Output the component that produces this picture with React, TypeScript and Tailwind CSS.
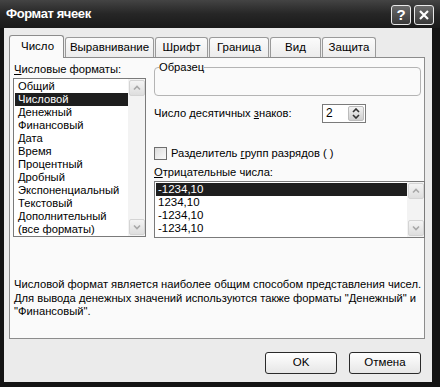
import React from 'react';

const formats = [
  'Общий',
  'Числовой',
  'Денежный',
  'Финансовый',
  'Дата',
  'Время',
  'Процентный',
  'Дробный',
  'Экспоненциальный',
  'Текстовый',
  'Дополнительный',
  '(все форматы)',
];

const negatives = ['-1234,10', '1234,10', '-1234,10', '-1234,10'];

const tabs = ['Выравнивание', 'Шрифт', 'Граница', 'Вид', 'Защита'];
const tabWidths = ['w-[89px]', 'w-[53px]', 'w-[60px]', 'w-[51px]', 'w-[54px]'];

function ScrollArrow({ down }: { down?: boolean }) {
  return (
    <div className="w-[16px] h-[16px] rounded-[2px] border border-[#d4d4d4] bg-gradient-to-b from-[#f4f4f4] to-[#dedede] flex items-center justify-center">
      <svg width="8" height="6" viewBox="0 0 8 6">
        <path
          d={down ? 'M1 1.5 L4 4.5 L7 1.5' : 'M1 4.5 L4 1.5 L7 4.5'}
          fill="none"
          stroke="#a8a8a8"
          strokeWidth="1.6"
        />
      </svg>
    </div>
  );
}

function Scrollbar() {
  return (
    <div className="w-[17px] flex flex-col justify-between bg-[#f3f3f3] py-[1px] pl-[1px]">
      <ScrollArrow />
      <ScrollArrow down />
    </div>
  );
}

function TitleButton({ children }: { children: React.ReactNode }) {
  return (
    <div className="w-[20px] h-[20px] rounded-[3px] border border-[#e8e8e8] bg-gradient-to-b from-[#6a6a6a] to-[#3a3a3a] flex items-center justify-center text-white font-bold text-[15px] leading-none">
      {children}
    </div>
  );
}

export default function App() {
  return (
    <div
      className="w-[440px] h-[387px] bg-[#141414] flex flex-col text-[11px] text-black overflow-hidden"
      style={{ fontFamily: '"Liberation Sans", Arial, sans-serif' }}
    >
      {/* title bar */}
      <div className="h-[28px] flex items-center justify-between pl-[6px] pr-[6px] bg-gradient-to-b from-[#444] via-[#262626] to-[#1a1a1a]">
        <span className="text-white font-bold text-[13px] tracking-[-0.4px]">Формат ячеек</span>
        <div className="flex gap-[3px] pt-[1px]">
          <TitleButton>?</TitleButton>
          <TitleButton>
            <svg width="12" height="12" viewBox="0 0 12 12">
              <path d="M2 2 L10 10 M10 2 L2 10" stroke="white" strokeWidth="2.2" />
            </svg>
          </TitleButton>
        </div>
      </div>

      {/* dialog body */}
      <div className="ml-[4px] mr-[8px] h-[354px] bg-[#ebebeb] flex flex-col">
        {/* tabs */}
        <div className="flex items-end h-[29px] pl-[5px]">
          <div className="w-[55px] h-[23px] border border-b-0 border-[#8c8c8c] rounded-t-[3px] bg-[#fafafa] flex items-center pl-[11px] relative z-10 -mb-[1px] text-[11.5px]">
            Число
          </div>
          {tabs.map((t, i) => (
            <div
              key={t}
              className={`${tabWidths[i]} h-[20px] ml-[1px] border border-b-0 border-[#9a9a9a] rounded-t-[3px] bg-gradient-to-b from-[#fbfbfb] to-[#ececec] flex items-center justify-center text-[11.5px]`}
            >
              {t}
            </div>
          ))}
        </div>

        {/* panel */}
        <div className="ml-[5px] w-[416px] h-[282px] border border-[#8c8c8c] bg-[#fafafa] flex flex-col">
          <div className="flex pl-[3px] pt-[4px]">
            {/* left column */}
            <div className="w-[134px] flex flex-col">
              <div className="h-[16px] leading-[14px] pl-[1px] text-[11.2px]">
                <span className="underline underline-offset-1">Ч</span>исловые форматы:
              </div>
              <div className="h-[159px] border border-[#7a7a7a] bg-white flex">
                <div className="flex-1 flex flex-col pt-[1px] pl-[1px] text-[11.2px]">
                  {formats.map((f, i) => (
                    <div
                      key={f}
                      className={`h-[13px] leading-[13px] pl-[3px] whitespace-nowrap ${
                        i === 1 ? 'bg-[#1e1e1e] text-white' : ''
                      }`}
                    >
                      {f}
                    </div>
                  ))}
                </div>
                <Scrollbar />
              </div>
            </div>

            {/* right column */}
            <div className="ml-[8px] w-[270px] flex flex-col text-[11.2px]">
              <fieldset className="w-[267px] h-[35px] border border-[#b4b4b4] rounded-[4px] px-[4px] -mt-[1px]">
                <legend className="px-0 leading-[12px]">Образец</legend>
              </fieldset>

              <div className="flex items-center mt-[8px] h-[18px]">
                <span className="w-[168px] leading-[14px]">
                  Число десятичных <span className="underline underline-offset-1">з</span>наков:
                </span>
                <div className="w-[44px] h-[19px] border border-[#7a7a7a] bg-white flex items-center">
                  <span className="flex-1 pl-[3px] text-[12px]">2</span>
                  <div className="w-[16px] h-[15px] mr-[1px] rounded-[2px] border border-[#bcbcbc] bg-gradient-to-b from-[#f2f2f2] to-[#cfcfcf] flex items-center justify-center">
                    <svg width="8" height="11" viewBox="0 0 8 11">
                      <path d="M1 4 L4 1 L7 4 M1 7 L4 10 L7 7" fill="none" stroke="#333" strokeWidth="1.6" />
                    </svg>
                  </div>
                </div>
              </div>

              <div className="flex items-center mt-[24px] h-[14px]">
                <div className="w-[13px] h-[13px] border border-[#6e6e6e] bg-gradient-to-br from-[#dcdcdc] to-[#fafafa]" />
                <span className="ml-[4px]">
                  Разделитель <span className="underline underline-offset-1">г</span>рупп разрядов ( )
                </span>
              </div>

              <div className="mt-[5px] h-[16px] leading-[14px]">
                <span className="underline underline-offset-1">О</span>трицательные числа:
              </div>
              <div className="w-[271px] h-[57px] border border-[#7a7a7a] bg-white flex">
                <div className="flex-1 flex flex-col pt-[1px] pl-[1px] text-[11.5px]">
                  {negatives.map((n, i) => (
                    <div
                      key={i}
                      className={`h-[13px] leading-[13px] pl-[2px] ${i === 0 ? 'bg-[#1e1e1e] text-white' : ''}`}
                    >
                      {n}
                    </div>
                  ))}
                </div>
                <Scrollbar />
              </div>
            </div>
          </div>

          <div className="mt-[40px] pl-[4px] leading-[13.5px] whitespace-nowrap text-[11.2px]">
            <p>Числовой формат является наиболее общим способом представления чисел.</p>
            <p>Для вывода денежных значений используются также форматы "Денежный" и</p>
            <p>"Финансовый".</p>
          </div>
        </div>

        {/* buttons */}
        <div className="flex justify-end gap-[12px] pr-[11px] mt-[13px] text-[11.5px]">
          <button className="w-[72px] h-[22px] rounded-[3px] border border-[#2a2a2a] bg-gradient-to-b from-white to-[#e6e6e6]">
            OK
          </button>
          <button className="w-[72px] h-[22px] rounded-[3px] border border-[#2a2a2a] bg-gradient-to-b from-white to-[#e6e6e6]">
            Отмена
          </button>
        </div>
      </div>
    </div>
  );
}
